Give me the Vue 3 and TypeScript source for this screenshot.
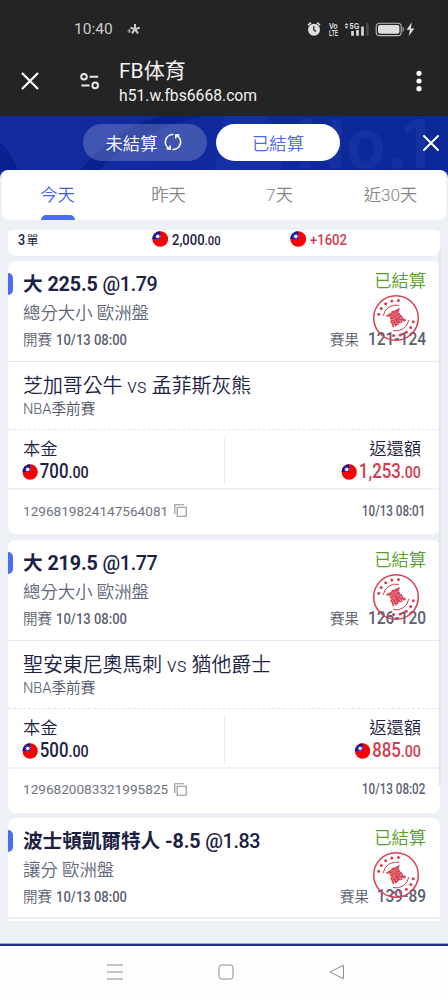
<script setup lang="ts">
interface Bet {
  pick: string
  odds: string
  market: string
  start: string
  result: string
  match: string
  league: string
  stake: string
  payout: string
  orderNo: string
  settledAt: string
  partial?: boolean
}

const tabs = ['今天', '昨天', '7天', '近30天']

const bets: Bet[] = [
  {
    pick: '大 225.5',
    odds: '@1.79',
    market: '總分大小 歐洲盤',
    start: '10/13 08:00',
    result: '121-124',
    match: '芝加哥公牛 vs 孟菲斯灰熊',
    league: 'NBA季前賽',
    stake: '700',
    payout: '1,253',
    orderNo: '1296819824147564081',
    settledAt: '10/13 08:01',
  },
  {
    pick: '大 219.5',
    odds: '@1.77',
    market: '總分大小 歐洲盤',
    start: '10/13 08:00',
    result: '126-120',
    match: '聖安東尼奧馬刺 vs 猶他爵士',
    league: 'NBA季前賽',
    stake: '500',
    payout: '885',
    orderNo: '1296820083321995825',
    settledAt: '10/13 08:02',
  },
  {
    pick: '波士頓凱爾特人 -8.5',
    odds: '@1.83',
    market: '讓分 歐洲盤',
    start: '10/13 08:00',
    result: '139-89',
    match: '',
    league: '',
    stake: '',
    payout: '',
    orderNo: '',
    settledAt: '',
    partial: true,
  },
]

// dots along the two arcs of the seal, in degrees
const sealDots = [192, 213, 234, 256, 278, 12, 33, 54, 76, 98].map((deg) => {
  const a = (deg * Math.PI) / 180
  return { x: 24 + 17.6 * Math.cos(a), y: 24 + 17.6 * Math.sin(a) }
})
</script>

<template>
  <div class="phone">
    <svg class="defs" aria-hidden="true">
      <symbol id="flag" viewBox="0 0 16 16" preserveAspectRatio="none">
        <circle cx="8" cy="8" r="7.7" fill="#f20505" />
        <path d="M8 .3A7.7 7.7 0 0 0 .3 8H8Z" fill="#10109a" />
        <circle cx="5.6" cy="5.4" r="1.7" fill="#fff" />
        <circle cx="5.6" cy="5.4" r="2.4" fill="none" stroke="#c5c9f5" stroke-width=".7" stroke-dasharray=".7 .7" />
      </symbol>
    </svg>

    <header class="chrome">
      <div class="status">
        <span class="status__time">10:40</span>
        <svg class="status__star" viewBox="0 0 14 14">
          <path d="M8 7.2V2M8 7.2l4.8-1.6M8 7.2l3 4.2M8 7.2l-3 4.2M8 7.2L3.4 5.6" stroke="#ccc" stroke-width="2" fill="none" />
          <path d="M2.2 7v4M.4 9h3.8" stroke="#aaa" stroke-width="1.2" />
        </svg>
        <svg class="status__icons" viewBox="0 0 110 18">
          <circle cx="7" cy="9.7" r="6" fill="#dedede" />
          <path d="M1 5.2l3-2.6M13 5.2l-3-2.6" stroke="#dedede" stroke-width="1.6" />
          <path d="M6.8 6.2v3.8l2.3 1.5" stroke="#242424" stroke-width="1.3" fill="none" />
          <text x="22" y="8.5" class="tiny" textLength="8.5" lengthAdjust="spacingAndGlyphs">Vo</text>
          <text x="22" y="15.8" class="tiny" textLength="9" lengthAdjust="spacingAndGlyphs">LTE</text>
          <path d="M37.6 5.2l1.9-2.2 1.9 2.2zM37.6 6.6l1.9 2.2 1.9-2.2z" fill="#dedede" />
          <text x="42.6" y="8.6" class="tiny" textLength="9.8" lengthAdjust="spacingAndGlyphs">5G</text>
          <path d="M44.2 11h2.6v4.8h-2.6zM49.2 10h2.6v5.8h-2.6zM54.2 6.5h2.6v9.3h-2.6z" fill="#dedede" />
          <path d="M59.2 3h2.4v12.8h-2.4z" fill="#4b4b4b" />
          <rect x="69.2" y="3.2" width="25" height="12.4" rx="3.4" fill="none" stroke="#bbb" stroke-width="1.1" />
          <rect x="71" y="5" width="21.4" height="8.8" rx="2" fill="#dedede" />
          <path d="M95.6 6.5c1.6.6 1.6 5 0 5.7z" fill="#bbb" />
          <path d="M104.8 2.2l-5.2 7.6h3.4l-1.4 6.4 5.8-7.8h-3.6z" fill="#dedede" />
        </svg>
      </div>
      <div class="toolbar">
        <svg class="toolbar__close" viewBox="0 0 18 18">
          <path d="M1 1l16 16M17 1L1 17" stroke="#fff" stroke-width="2.2" />
        </svg>
        <svg class="toolbar__tune" viewBox="0 0 20 18">
          <g fill="none" stroke="#e6e6e6" stroke-width="2">
            <circle cx="4" cy="4.8" r="2.8" />
            <circle cx="15.2" cy="13.4" r="2.8" />
            <path d="M9.6 4.8h8.6M1.4 13.4h8.2" />
          </g>
        </svg>
        <div class="toolbar__page">
          <div class="toolbar__title">FB体育</div>
          <div class="toolbar__url">h51.w.fbs6668.com</div>
        </div>
        <svg class="toolbar__more" viewBox="0 0 6 22">
          <circle cx="3" cy="3.3" r="2.6" fill="#fff" />
          <circle cx="3" cy="11" r="2.6" fill="#fff" />
          <circle cx="3" cy="18.7" r="2.6" fill="#fff" />
        </svg>
      </div>
    </header>

    <div class="banner">
      <svg class="banner__art" viewBox="0 0 448 54">
        <path d="M160 0C125 10 100 32 80 54h20c24-26 54-44 106-54z" fill="#08218f" />
        <path d="M0 26c8 8 14 18 18 28H0z" fill="#08218f" />
        <path d="M224 0h42q26 28 14 54h-66z" fill="#1430a4" />
        <text x="296" y="52" class="banner__no" textLength="134" lengthAdjust="spacingAndGlyphs">No.1</text>
      </svg>
      <div class="banner__row">
        <button class="pill">
          未結算
          <svg class="pill__icon" viewBox="0 0 18 18">
            <g fill="none" stroke="#fff" stroke-width="1.6">
              <path d="M5.6 15.7A7.5 7.5 0 0 1 9.6 1.5" />
              <path d="M12.4 2.3A7.5 7.5 0 0 1 8.4 16.5" />
              <path d="M2.6 16h3.6v-3.6M15.4 2h-3.6v3.6" />
            </g>
          </svg>
        </button>
        <button class="pill pill--active">已結算</button>
        <svg class="banner__close" viewBox="0 0 16 16">
          <path d="M1 1l14 14M15 1L1 15" stroke="#fff" stroke-width="2" stroke-linecap="round" />
        </svg>
      </div>
    </div>

    <main class="content">
      <nav class="tabs">
        <div v-for="(tab, i) in tabs" :key="tab" class="tab" :class="{ 'tab--active': i === 0 }">{{ tab }}</div>
      </nav>

      <section class="summary">
        <div class="summary__count"><span class="num">3</span><small>單</small></div>
        <div class="summary__stake num">
          <svg class="flag"><use href="#flag" /></svg>2,000<small>.00</small>
        </div>
        <div class="summary__profit num">
          <svg class="flag"><use href="#flag" /></svg>+1602
        </div>
      </section>

      <article v-for="bet in bets" :key="bet.pick" class="card" :class="{ 'card--partial': bet.partial }">
        <div class="card__head">
          <div class="card__info">
            <div class="card__pick">{{ bet.pick }} <span>{{ bet.odds }}</span></div>
            <div class="card__market">{{ bet.market }}</div>
            <div class="card__time">開賽 <span class="num">{{ bet.start }}</span></div>
          </div>
          <div class="card__state">
            <div class="card__settled">已結算</div>
            <div class="card__result">賽果<span class="num">{{ bet.result }}</span></div>
            <svg class="seal" viewBox="0 0 48 48">
              <g fill="none" stroke="#d8404f">
                <circle cx="24" cy="24" r="22.3" stroke-width="1.5" />
                <path d="M11.2 22A13 13 0 0 1 27 11.4M36.8 26A13 13 0 0 1 21 36.6" stroke-width="1" />
              </g>
              <circle v-for="(dot, i) in sealDots" :key="i" :cx="dot.x" :cy="dot.y" r="1.5" fill="#d8404f" />
              <text x="24" y="29.8" class="seal__char" transform="rotate(-30 24 24)">贏</text>
            </svg>
          </div>
        </div>
        <template v-if="!bet.partial">
          <div class="card__match">
            <div class="card__teams">{{ bet.match }}</div>
            <div class="card__league">{{ bet.league }}</div>
          </div>
          <div class="card__money">
            <div class="money">
              <div class="money__label">本金</div>
              <div class="money__value num">
                <svg class="flag"><use href="#flag" /></svg>{{ bet.stake }}<small>.00</small>
              </div>
            </div>
            <div class="money money--return">
              <div class="money__label">返還額</div>
              <div class="money__value num">
                <svg class="flag"><use href="#flag" /></svg>{{ bet.payout }}<small>.00</small>
              </div>
            </div>
          </div>
          <div class="card__foot">
            <span class="card__order">{{ bet.orderNo }}</span>
            <svg class="card__copy" viewBox="0 0 13 13">
              <path d="M10 .8H.8V10M3.2 3.2h9v9h-9z" fill="none" stroke="#8b8f98" stroke-width="1.1" />
            </svg>
            <span class="card__date num">{{ bet.settledAt }}</span>
          </div>
        </template>
      </article>
      <div class="scrollbar" />
    </main>

    <footer class="navbar">
      <svg viewBox="0 0 16 16"><path d="M0 1h16M0 8h16M0 15h16" stroke="#8e8e8e" /></svg>
      <svg viewBox="0 0 16 16"><rect x="1" y="1" width="14" height="14" rx="2.5" fill="none" stroke="#8e8e8e" /></svg>
      <svg viewBox="0 0 16 16"><path d="M14.5 1.2v13.6L1 8z" fill="none" stroke="#8e8e8e" stroke-linejoin="round" /></svg>
    </footer>
  </div>
</template>

<style>
body {
  margin: 0;
}
</style>

<style scoped>
.phone {
  width: 448px;
  height: 1000px;
  display: flex;
  flex-direction: column;
  overflow: hidden;
  background: #0b2798;
  font-family: Roboto, 'Noto Sans CJK TC', sans-serif;
  font-weight: 400;
  color: #1b2142;
  white-space: nowrap;
}

.phone svg {
  display: block;
  flex: none;
}

.phone .defs {
  position: absolute;
  width: 0;
  height: 0;
}

/* condensed numerals */
.num {
  display: inline-block;
  transform: scaleX(0.84);
  transform-origin: left center;
  font-weight: 500;
}

.chrome {
  height: 116px;
  flex: none;
  background: #242424;
  color: #f2f2f2;
}

.status {
  display: flex;
  align-items: center;
  height: 42px;
  padding: 16px 31px 0 74px;
  box-sizing: border-box;
}

.status__time {
  font-size: 15.5px;
  color: #ccc;
  width: 53px;
}

.status__star {
  width: 14px;
  height: 14px;
}

.status__icons {
  width: 110px;
  height: 18px;
  margin-left: auto;
}

.tiny {
  font: 700 8.6px 'Liberation Sans', sans-serif;
  fill: #dedede;
}

.toolbar {
  display: flex;
  align-items: center;
  height: 74px;
  padding: 3px 26px 0 21px;
  box-sizing: border-box;
}

.toolbar__close {
  width: 18px;
  height: 18px;
}

.toolbar__tune {
  width: 20px;
  height: 18px;
  margin-left: 41px;
}

.toolbar__page {
  margin: 5px 0 0 19px;
}

.toolbar__title {
  font-size: 21px;
  line-height: 26px;
}

.toolbar__url {
  font-size: 15.7px;
  line-height: 24px;
}

.toolbar__more {
  width: 6px;
  height: 22px;
  margin-left: auto;
}

.banner {
  position: relative;
  height: 54px;
  flex: none;
  background: linear-gradient(90deg, #142ba0, #0b2798);
}

.banner__art {
  position: absolute;
  top: 0;
  left: 0;
  width: 448px;
  height: 54px;
}

.banner__no {
  font: 700 68px Inter, sans-serif;
  fill: #15319f;
}

.banner__row {
  position: relative;
  display: flex;
  align-items: center;
  height: 53px;
  padding: 0 9px 0 83px;
}

.pill {
  display: flex;
  align-items: center;
  justify-content: center;
  gap: 7px;
  width: 124px;
  height: 37px;
  margin-right: 9px;
  padding: 0 2px 1px 0;
  border: 0;
  border-radius: 19px;
  box-sizing: border-box;
  background: rgba(255, 255, 255, 0.2);
  color: #fff;
  font: 350 17.3px 'Noto Sans CJK TC', sans-serif;
}

.pill--active {
  padding-right: 0;
  background: #fff;
  color: #4a69e2;
}

.pill__icon {
  width: 18px;
  height: 18px;
}

.banner__close {
  width: 16px;
  height: 16px;
  margin-left: auto;
}

.content {
  position: relative;
  height: 773px;
  flex: none;
  border-bottom: 1px solid #8fa8ee;
  border-radius: 8px 8px 0 0;
  background: #edf1f5;
  overflow: hidden;
}

.tabs {
  display: grid;
  grid-template-columns: repeat(4, 1fr);
  height: 50px;
  margin: 0 2px;
  border-radius: 8px;
  background: #fff;
}

.tab {
  display: flex;
  flex-direction: column;
  align-items: center;
  font-size: 17.3px;
  font-weight: 350;
  line-height: 50px;
  color: #858585;
}

.tab--active {
  color: #4062e6;
}

.tab--active::after {
  content: '';
  width: 34px;
  height: 5px;
  margin-top: -5px;
  border-radius: 5px 5px 0 0;
  background: #4b6df0;
}

.summary {
  display: grid;
  grid-template-columns: 134px 138px 1fr;
  align-items: center;
  height: 26px;
  margin: 10px 8px 5px;
  padding: 0 10px 6px;
  border-radius: 4px 4px 8px 8px;
  box-sizing: border-box;
  background: #fff;
  font-size: 15px;
}

.summary__count small {
  font-size: 12px;
}

.summary__stake,
.summary__profit {
  display: flex;
  align-items: baseline;
  transform: scaleX(0.87);
}

.summary__stake small {
  font-size: 13px;
}

.flag {
  width: 19px;
  height: 16px;
}

.summary .flag {
  align-self: center;
  margin: -3px 4px 0 0;
}

.summary__profit {
  color: #d33c4d;
}

.card {
  height: 273px;
  margin: 0 8px 5.5px;
  border-radius: 8px;
  background: #fff;
}

.card__head {
  position: relative;
  display: flex;
  justify-content: space-between;
  height: 101px;
  padding: 8px 14px 0 15px;
  box-sizing: border-box;
  border-bottom: 1px solid #e6e8ed;
}

.card__head::before {
  content: '';
  position: absolute;
  left: 0;
  top: 12px;
  width: 5px;
  height: 22px;
  border-radius: 0 5px 5px 0;
  background: #4b6df5;
}

.card__info {
  padding-top: 1px;
}

.card__pick {
  font-size: 19.7px;
  line-height: 30px;
  font-weight: 700;
  letter-spacing: -0.1px;
}

.card__pick span {
  font-weight: 500;
  letter-spacing: -0.4px;
}

.card__market {
  font-size: 17.4px;
  font-weight: 350;
  line-height: 27px;
  color: #606577;
}

.card__time,
.card__result {
  font-size: 14.5px;
  font-weight: 350;
  line-height: 27px;
  color: #5c6072;
}

.card__time .num {
  font-size: 15.5px;
}

.card__state {
  text-align: right;
}

.card__settled {
  font-size: 17.3px;
  font-weight: 350;
  line-height: 24px;
  color: #53a026;
}

.card__result {
  margin-top: 33px;
}

.card__result .num {
  margin-left: 1px;
  font-size: 17.6px;
  font-weight: 500;
  transform: scaleX(0.88);
  transform-origin: right center;
}

.seal {
  position: absolute;
  right: 20px;
  top: 33px;
  width: 48px;
  height: 48px;
}

.seal__char {
  font: 900 16px 'Noto Sans CJK TC', sans-serif;
  text-anchor: middle;
  fill: #d8404f;
}

.card__match {
  height: 68px;
  padding: 10px 15px 0;
  box-sizing: border-box;
  border-bottom: 1px dashed #e3e5ea;
}

.card__teams {
  font-size: 19.9px;
  font-weight: 350;
  line-height: 29px;
}

.card__league {
  font-size: 14.6px;
  font-weight: 350;
  line-height: 17px;
  color: #505468;
}

.card__money {
  display: grid;
  grid-template-columns: 1fr 1fr;
  height: 60px;
  padding: 8px 15px 0;
  box-sizing: border-box;
  border-bottom: 2px solid #f0f1f4;
}

.money {
  height: 46px;
}

.money--return {
  padding-right: 4px;
  border-left: 1px solid #e8eaee;
  text-align: right;
}

.money__label {
  font-size: 17.3px;
  font-weight: 350;
  line-height: 23px;
}

.money__value {
  display: flex;
  align-items: baseline;
  font-size: 20px;
  line-height: 21px;
}

.money__value .flag {
  align-self: center;
  margin: 0 2px 0 -1px;
}

.money__value small {
  font-size: 17px;
}

.money--return .money__value {
  justify-content: flex-end;
  transform-origin: right center;
  color: #d33c4d;
}

.card__foot {
  display: flex;
  align-items: center;
  height: 41px;
  padding: 0 15px;
}

.card__order {
  font-size: 13.6px;
  color: #70747f;
}

.card__copy {
  width: 13px;
  height: 13px;
  margin-left: 6px;
}

.card__date {
  margin-left: auto;
  font-size: 14px;
  transform: scaleX(0.83);
  transform-origin: right center;
  color: #5c6072;
}

.card--partial {
  height: 103px;
  border-radius: 8px 8px 0 0;
}

.card--partial .card__head {
  border-bottom: 2px solid #eef0f4;
}

.scrollbar {
  position: absolute;
  right: 7px;
  top: 80px;
  width: 2px;
  height: 536px;
  border-radius: 2px;
  background: #e2e4e8;
}

.navbar {
  display: flex;
  align-items: flex-start;
  gap: 95px;
  flex: 1;
  padding: 18px 0 0 107px;
  border-top: 2px solid #1c2f86;
  background: #fdfdfd;
}

.navbar svg {
  width: 16px;
  height: 16px;
}
</style>
